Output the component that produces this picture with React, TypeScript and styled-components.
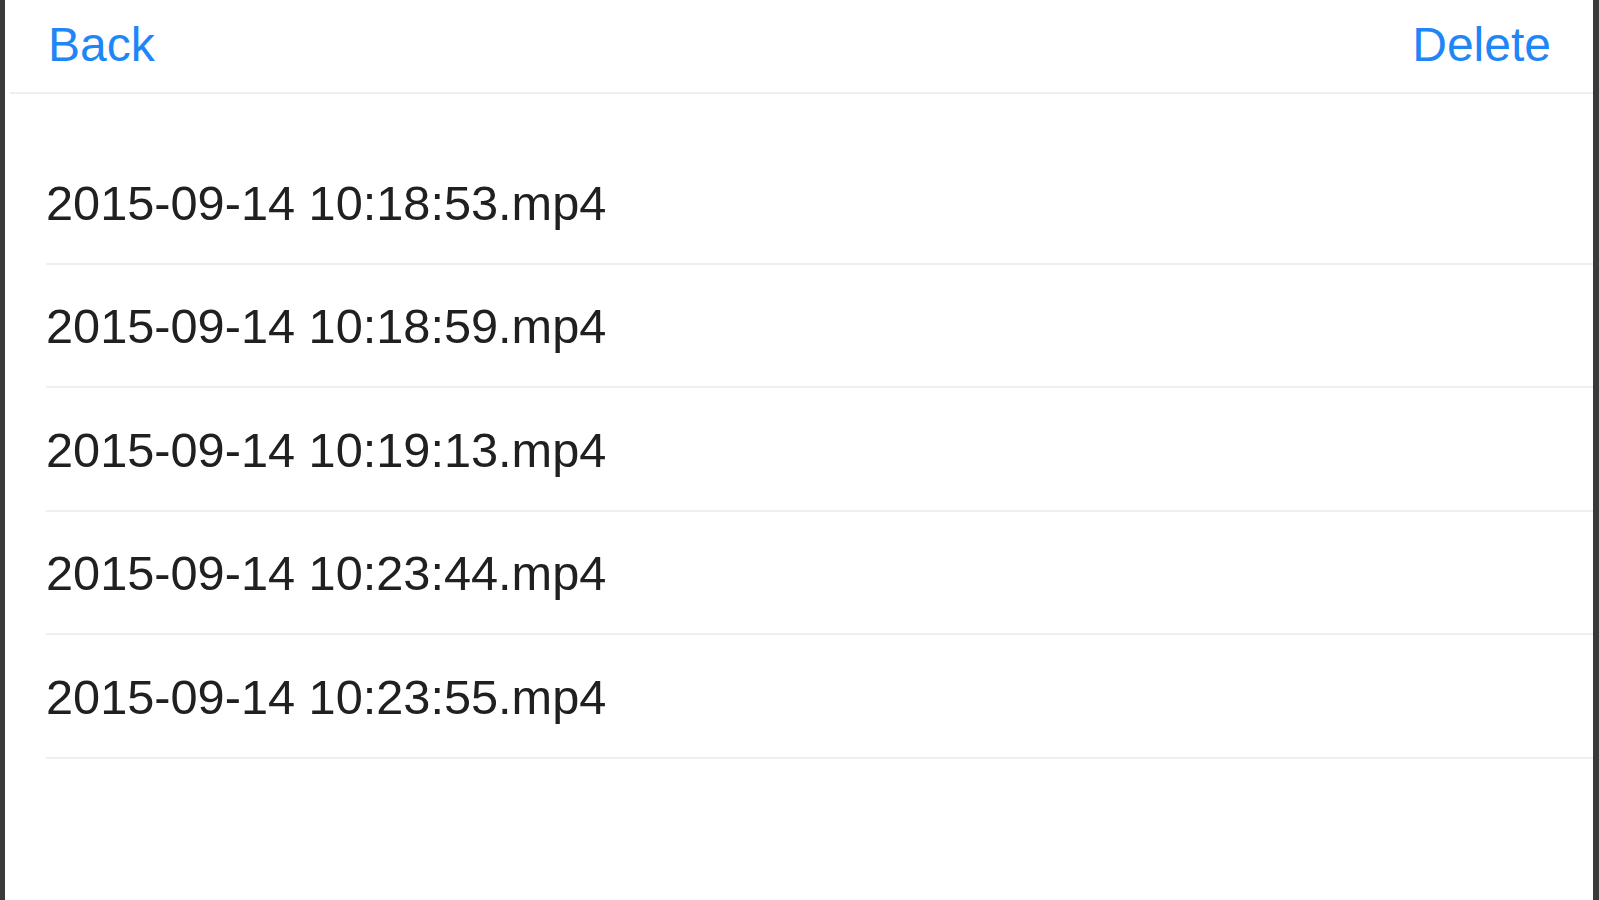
import React from 'react';
import styled, { createGlobalStyle } from 'styled-components';

const GlobalStyle = createGlobalStyle`
  html, body {
    margin: 0;
    padding: 0;
    background: #ffffff;
  }
  body {
    font-family: 'Liberation Sans', Arial, Helvetica, sans-serif;
  }
`;

const files: string[] = [
  '2015-09-14 10:18:53.mp4',
  '2015-09-14 10:18:59.mp4',
  '2015-09-14 10:19:13.mp4',
  '2015-09-14 10:23:44.mp4',
  '2015-09-14 10:23:55.mp4',
];

export default function App(): JSX.Element {
  return (
    <>
      <GlobalStyle />
      <Screen>
        <NavBar>
          <NavButton>Back</NavButton>
          <NavButton>Delete</NavButton>
        </NavBar>
        <FileList>
          {files.map((name) => (
            <FileRow key={name}>
              <FileName>{name}</FileName>
            </FileRow>
          ))}
        </FileList>
      </Screen>
    </>
  );
}

const Screen = styled.div`
  box-sizing: border-box;
  width: 1599px;
  height: 900px;
  background: #ffffff;
  border-left: 5px solid #3a3a3a;
  border-right: 6px solid #3a3a3a;
  display: flex;
  flex-direction: column;
  overflow: hidden;
`;

const NavBar = styled.div`
  box-sizing: border-box;
  height: 94px;
  padding: 0 42px 4px 38px;
  border-bottom: 2px solid #eeeeee;
  margin-left: 5px;
  display: flex;
  align-items: center;
  justify-content: space-between;
`;

const NavButton = styled.button`
  border: none;
  background: none;
  padding: 0;
  font-family: 'Liberation Sans', Arial, Helvetica, sans-serif;
  font-size: 48px;
  color: #1f86f7;
  cursor: pointer;
`;

const FileList = styled.div`
  margin-top: 47px;
  margin-left: 41px;
  display: flex;
  flex-direction: column;
`;

const FileRow = styled.div`
  box-sizing: border-box;
  height: 123.5px;
  border-bottom: 2px solid #efefef;
  display: flex;
  align-items: center;
  padding-top: 2px;
`;

const FileName = styled.span`
  font-size: 48.7px;
  color: #202020;
`;
